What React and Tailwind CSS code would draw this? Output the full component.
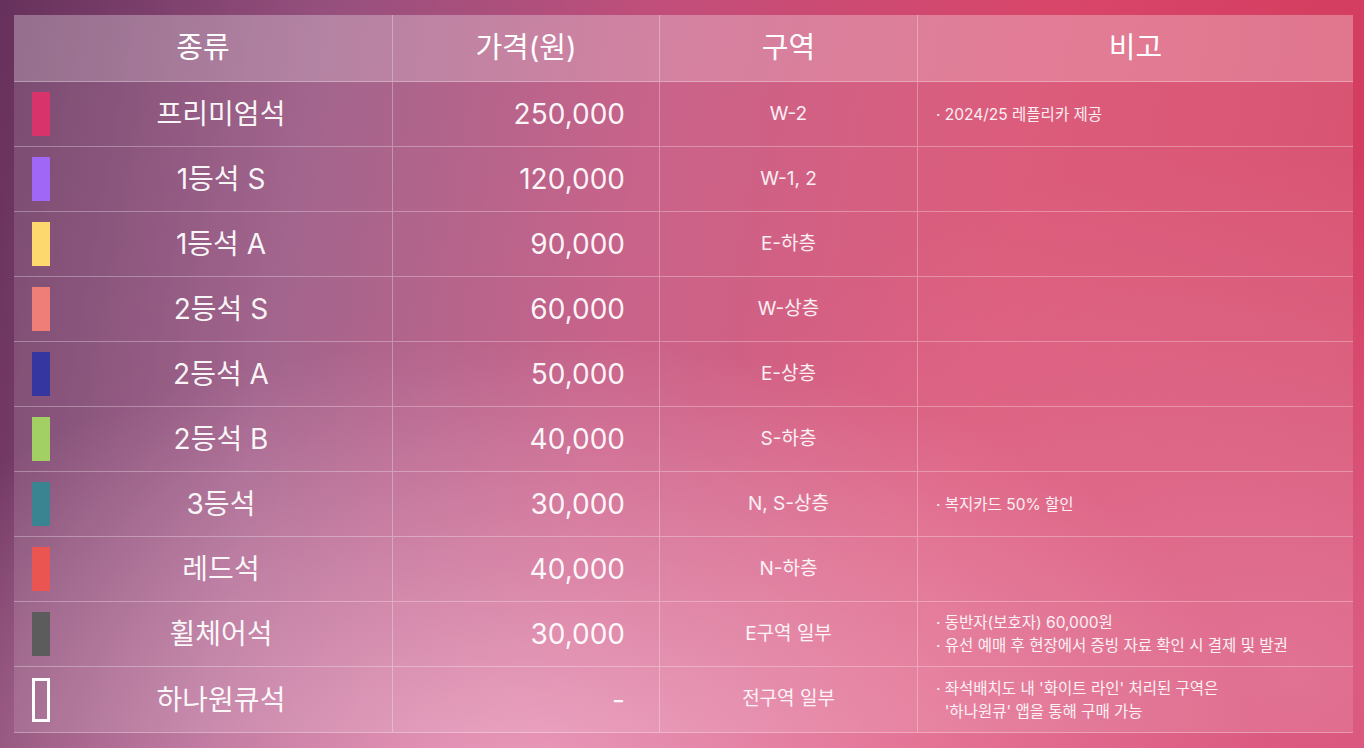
import React from "react";

const rows = [
  { name: "프리미엄석", color: "bg-[#d8336b]", price: "250,000", zone: "W-2", notes: ["· 2024/25 레플리카 제공"] },
  { name: "1등석 S", color: "bg-[#a066f5]", price: "120,000", zone: "W-1, 2", notes: [] },
  { name: "1등석 A", color: "bg-[#fdd86f]", price: "90,000", zone: "E-하층", notes: [] },
  { name: "2등석 S", color: "bg-[#ef7d78]", price: "60,000", zone: "W-상층", notes: [] },
  { name: "2등석 A", color: "bg-[#3636a0]", price: "50,000", zone: "E-상층", notes: [] },
  { name: "2등석 B", color: "bg-[#a3d064]", price: "40,000", zone: "S-하층", notes: [] },
  { name: "3등석", color: "bg-[#3a8390]", price: "30,000", zone: "N, S-상층", notes: ["· 복지카드 50% 할인"] },
  { name: "레드석", color: "bg-[#ea5451]", price: "40,000", zone: "N-하층", notes: [] },
  { name: "휠체어석", color: "bg-[#5c5c5c]", price: "30,000", zone: "E구역 일부", notes: ["· 동반자(보호자) 60,000원", "· 유선 예매 후 현장에서 증빙 자료 확인 시 결제 및 발권"] },
  { name: "하나원큐석", color: "outline", price: "-", zone: "전구역 일부", notes: ["· 좌석배치도 내 '화이트 라인' 처리된 구역은", "\u00a0\u00a0'하나원큐' 앱을 통해 구매 가능"] },
];

export default function App() {
  return (
    <div
      className="w-[1364px] h-[748px] overflow-hidden pl-[14px] pt-[15px] text-white bg-[radial-gradient(ellipse_55%_60%_at_38%_105%,rgba(245,175,205,0.8),rgba(245,175,205,0)_100%),radial-gradient(ellipse_50%_70%_at_95%_90%,rgba(225,110,150,0.7),rgba(225,110,150,0)_100%),linear-gradient(100deg,#66315c_0%,#96507e_22%,#c24e7a_45%,#d8466a_70%,#d23a5c_100%)]"
      style={{ fontFamily: 'Inter, "Noto Sans CJK KR", "Noto Sans", sans-serif' }}
    >
      <div className="w-[1339px] bg-white/[0.12] border-b border-white/30">
        <div className="grid grid-cols-[379px_267px_258px_435px] h-[67px] bg-white/[0.2] border-b border-white/30">
          {["종류", "가격(원)", "구역", "비고"].map((h, i) => (
            <div
              key={h}
              className={`flex items-center justify-center text-[29px] font-normal ${i < 3 ? "border-r border-white/30" : ""}`}
            >
              {h}
            </div>
          ))}
        </div>
        {rows.map((r, idx) => (
          <div
            key={r.name}
            className={`grid grid-cols-[379px_267px_258px_435px] h-[65px] ${idx < rows.length - 1 ? "border-b border-white/30" : ""}`}
          >
            <div className="flex items-center pl-[18px] border-r border-white/30">
              {r.color === "outline" ? (
                <div className="w-[18px] h-[44px] border-[3px] border-white" />
              ) : (
                <div className={`w-[18px] h-[44px] ${r.color}`} />
              )}
              <div className="flex-1 text-center text-[28px] text-white/95">{r.name}</div>
            </div>
            <div className="flex items-center justify-end pr-[34px] text-[28px] text-white/95 border-r border-white/30">
              {r.price}
            </div>
            <div className="flex items-center justify-center text-[19px] text-white/90 border-r border-white/30">
              {r.zone}
            </div>
            <div className="flex flex-col justify-center pl-[18px] text-[15.5px] leading-[23px] text-white/90">
              {r.notes.map((n) => (
                <div key={n} className="whitespace-pre">{n}</div>
              ))}
            </div>
          </div>
        ))}
      </div>
    </div>
  );
}
